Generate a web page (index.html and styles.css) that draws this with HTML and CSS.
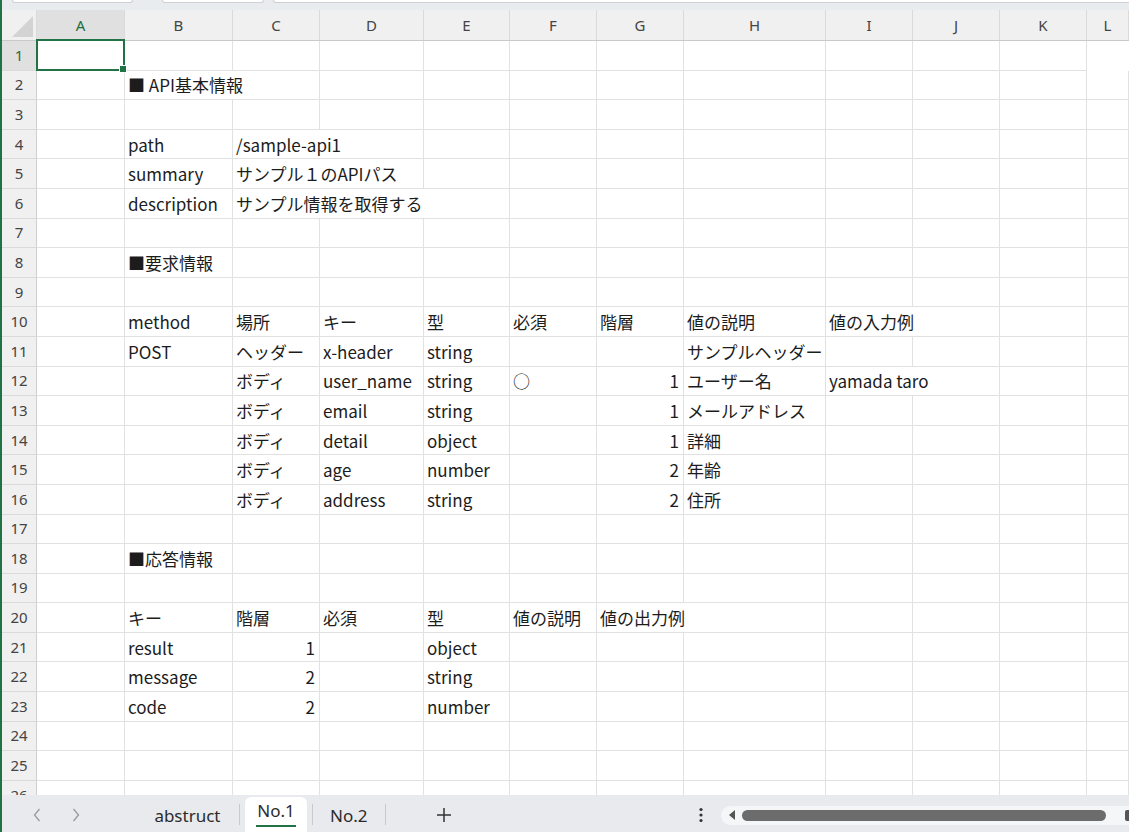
FILE: index.html
```html
<!DOCTYPE html>
<html lang="ja">
<head>
<meta charset="utf-8">
<title>Sheet</title>
<link rel="stylesheet" href="styles.css">
</head>
<body>
<div class="app">
  <div class="sheet">
    <div class="topstrip">
      <div class="box b1"></div>
      <div class="box b2"></div>
      <div class="box b3"></div>
    </div>
    <div class="colhead">
      <div class="corner"><div class="tri"></div></div>
      <div class="act">A</div><div>B</div><div>C</div><div>D</div><div>E</div><div>F</div><div>G</div><div>H</div><div>I</div><div>J</div><div>K</div><div>L</div>
    </div>

    <div class="row"><div class="rh act">1</div><div class="sel"><span class="selbox"></span></div><div></div><div></div><div></div><div></div><div></div><div></div><div></div><div></div><div></div><div></div></div>
    <div class="row"><div class="rh">2</div><div></div><div class="sp2">■ API基本情報</div><div></div><div></div><div></div><div></div><div></div><div></div><div></div><div></div><div></div></div>
    <div class="row"><div class="rh">3</div><div></div><div></div><div></div><div></div><div></div><div></div><div></div><div></div><div></div><div></div><div></div><div></div></div>
    <div class="row"><div class="rh">4</div><div></div><div>path</div><div class="sp2">/sample-api1</div><div></div><div></div><div></div><div></div><div></div><div></div><div></div><div></div></div>
    <div class="row"><div class="rh">5</div><div></div><div>summary</div><div class="sp2">サンプル１のAPIパス</div><div></div><div></div><div></div><div></div><div></div><div></div><div></div><div></div></div>
    <div class="row"><div class="rh">6</div><div></div><div>description</div><div class="sp3">サンプル情報を取得する</div><div></div><div></div><div></div><div></div><div></div><div></div><div></div></div>
    <div class="row"><div class="rh">7</div><div></div><div></div><div></div><div></div><div></div><div></div><div></div><div></div><div></div><div></div><div></div><div></div></div>
    <div class="row"><div class="rh">8</div><div></div><div>■要求情報</div><div></div><div></div><div></div><div></div><div></div><div></div><div></div><div></div><div></div><div></div></div>
    <div class="row"><div class="rh">9</div><div></div><div></div><div></div><div></div><div></div><div></div><div></div><div></div><div></div><div></div><div></div><div></div></div>
    <div class="row"><div class="rh">10</div><div></div><div>method</div><div>場所</div><div>キー</div><div>型</div><div>必須</div><div>階層</div><div>値の説明</div><div class="sp2">値の入力例</div><div></div><div></div></div>
    <div class="row"><div class="rh">11</div><div></div><div>POST</div><div>ヘッダー</div><div>x-header</div><div>string</div><div></div><div></div><div>サンプルヘッダー</div><div></div><div></div><div></div><div></div></div>
    <div class="row"><div class="rh">12</div><div></div><div></div><div>ボディ</div><div>user_name</div><div>string</div><div>○</div><div class="n">1</div><div>ユーザー名</div><div class="sp2">yamada taro</div><div></div><div></div></div>
    <div class="row"><div class="rh">13</div><div></div><div></div><div>ボディ</div><div>email</div><div>string</div><div></div><div class="n">1</div><div>メールアドレス</div><div></div><div></div><div></div><div></div></div>
    <div class="row"><div class="rh">14</div><div></div><div></div><div>ボディ</div><div>detail</div><div>object</div><div></div><div class="n">1</div><div>詳細</div><div></div><div></div><div></div><div></div></div>
    <div class="row"><div class="rh">15</div><div></div><div></div><div>ボディ</div><div>age</div><div>number</div><div></div><div class="n">2</div><div>年齢</div><div></div><div></div><div></div><div></div></div>
    <div class="row"><div class="rh">16</div><div></div><div></div><div>ボディ</div><div>address</div><div>string</div><div></div><div class="n">2</div><div>住所</div><div></div><div></div><div></div><div></div></div>
    <div class="row"><div class="rh">17</div><div></div><div></div><div></div><div></div><div></div><div></div><div></div><div></div><div></div><div></div><div></div><div></div></div>
    <div class="row"><div class="rh">18</div><div></div><div>■応答情報</div><div></div><div></div><div></div><div></div><div></div><div></div><div></div><div></div><div></div><div></div></div>
    <div class="row"><div class="rh">19</div><div></div><div></div><div></div><div></div><div></div><div></div><div></div><div></div><div></div><div></div><div></div><div></div></div>
    <div class="row"><div class="rh">20</div><div></div><div>キー</div><div>階層</div><div>必須</div><div>型</div><div>値の説明</div><div class="sp2">値の出力例</div><div></div><div></div><div></div><div></div></div>
    <div class="row"><div class="rh">21</div><div></div><div>result</div><div class="n">1</div><div></div><div>object</div><div></div><div></div><div></div><div></div><div></div><div></div><div></div></div>
    <div class="row"><div class="rh">22</div><div></div><div>message</div><div class="n">2</div><div></div><div>string</div><div></div><div></div><div></div><div></div><div></div><div></div><div></div></div>
    <div class="row"><div class="rh">23</div><div></div><div>code</div><div class="n">2</div><div></div><div>number</div><div></div><div></div><div></div><div></div><div></div><div></div><div></div></div>
    <div class="row"><div class="rh">24</div><div></div><div></div><div></div><div></div><div></div><div></div><div></div><div></div><div></div><div></div><div></div><div></div></div>
    <div class="row"><div class="rh">25</div><div></div><div></div><div></div><div></div><div></div><div></div><div></div><div></div><div></div><div></div><div></div><div></div></div>
    <div class="row"><div class="rh">26</div><div></div><div></div><div></div><div></div><div></div><div></div><div></div><div></div><div></div><div></div><div></div><div></div></div>
  </div>

  <div class="tabbar">
    <div class="nav nav1"><svg width="10" height="16" viewBox="0 0 10 16"><path d="M7.5 2 L2.5 8 L7.5 14" fill="none" stroke="#9a9a9a" stroke-width="1.3"/></svg></div>
    <div class="nav"><svg width="10" height="16" viewBox="0 0 10 16"><path d="M2.5 2 L7.5 8 L2.5 14" fill="none" stroke="#9a9a9a" stroke-width="1.3"/></svg></div>
    <div class="tab t-abs">abstruct</div>
    <div class="sep"></div>
    <div class="tab active"><span class="ul">No.1</span></div>
    <div class="sep s2"></div>
    <div class="tab t-no2">No.2</div>
    <div class="sep"></div>
    <div class="add"><svg width="16" height="16" viewBox="0 0 16 16"><path d="M8 1 V15 M1 8 H15" stroke="#333" stroke-width="1.5"/></svg></div>
    <div class="more"><svg width="4" height="16" viewBox="0 0 4 16"><circle cx="2" cy="2.5" r="1.6" fill="#333"/><circle cx="2" cy="8" r="1.6" fill="#333"/><circle cx="2" cy="13.5" r="1.6" fill="#333"/></svg></div>
    <div class="scroll">
      <svg class="larr" width="8" height="12" viewBox="0 0 8 12"><path d="M7 1 L1 6 L7 11 Z" fill="#555"/></svg>
      <div class="thumb"></div>
      <div class="rarr"></div>
    </div>
  </div>
</div>
</body>
</html>
```
FILE: styles.css
```css
* { box-sizing: border-box; margin: 0; padding: 0; }
html, body { width: 1129px; height: 832px; overflow: hidden; background: #fff; }
body { font-family: "Noto Sans CJK JP", "Noto Sans", sans-serif; }

.app {
  height: 832px;
  border-left: 2px solid #217346;
  display: flex;
  flex-direction: column;
}

.sheet { height: 795px; overflow: hidden; flex: none; }

.topstrip { height: 10px; background: #e9ecef; display: flex; }
.box {
  height: 3px;
  background: #fff;
  border: 1px solid #cdd0d4;
  border-top: none;
  border-radius: 0 0 5px 5px;
}
.b1 { margin-left: 10px; width: 121px; }
.b2 { margin-left: 29px; width: 102px; }
.b3 { margin-left: 9px; flex: 1; border-right: none; border-radius: 0 0 0 5px; }

.colhead, .row {
  display: grid;
  grid-template-columns: 35px 88px 108px 87px 104px 86px 87px 87px 142px 87px 87px 87px 1fr;
}

.colhead { height: 31px; background: #f0f0f0; border-bottom: 1px solid #c9c9c9; }
.colhead > div {
  border-right: 1px solid #dadada;
  display: flex;
  align-items: center;
  justify-content: center;
  font-family: "Noto Sans", sans-serif;
  font-size: 15px;
  color: #444;
}
.colhead > .act { background: #e0e0e0; color: #1e6e3e; }
.corner { align-items: flex-end !important; justify-content: flex-end !important; padding: 0 3px 3px 0; }
.tri { width: 21px; height: 21px; background: #d3d3d3; clip-path: polygon(100% 0, 100% 100%, 0 100%); }

.row { height: 29.6px; }
.row > div {
  border-right: 1px solid #e1e1e1;
  border-bottom: 1px solid #e1e1e1;
  padding: 0 3px;
  display: flex;
  align-items: center;
  white-space: nowrap;
  font-size: 17px;
  line-height: 1;
  color: #1c1c1c;
  min-width: 0;
}
.row > .rh {
  background: #f0f0f0;
  border-right: 1px solid #cfcfcf;
  border-bottom: 1px solid #dadada;
  justify-content: center;
  font-family: "Noto Sans", sans-serif;
  font-size: 15px;
  color: #444;
  padding: 0;
}
.row > .rh.act { background: #e0e0e0; color: #1e6e3e; }
.row > .n { justify-content: flex-end; padding-right: 4px; }
.row > .sp2 { grid-column: span 2; }
.row > .sp3 { grid-column: span 3; }

.sel { position: relative; }
.selbox {
  position: absolute;
  left: -1px; top: -2px; right: -1px; bottom: -1px;
  border: 2px solid #217346;
  z-index: 2;
}
.selbox::after {
  content: "";
  position: absolute;
  right: -4px; bottom: -4px;
  width: 6px; height: 6px;
  background: #217346;
  border: 1px solid #fff;
}

.tabbar {
  height: 37px;
  flex: none;
  background: #e8eaee;
  display: flex;
  align-items: stretch;
  font-family: "Noto Sans", sans-serif;
  font-size: 17px;
  color: #2b2b2b;
}
.nav { width: 39px; display: flex; align-items: center; justify-content: center; padding-top: 2px; }
.nav1 { margin-left: 16px; }
.tab { display: flex; align-items: center; justify-content: center; padding-top: 3px; }
.t-abs { margin-left: 40px; width: 104px; }
.sep { width: 1px; background: #c8c9cc; margin: 9px 0 7px; }
.active {
  margin: 2px 5px 0 5px;
  width: 62px;
  background: #fff;
  border-radius: 6px 6px 0 0;
  align-items: flex-start;
  padding-top: 3px;
}
.ul { border-bottom: 2px solid #217346; padding: 0 1px 3px; line-height: 22px; }
.t-no2 { width: 72px; }
.add { width: 118px; display: flex; align-items: center; justify-content: center; padding-top: 2px; }
.more { margin-left: 185px; width: 26px; display: flex; align-items: center; justify-content: center; padding-top: 2px; }
.scroll {
  margin-left: 7px;
  flex: 1;
  align-self: center;
  height: 19px;
  margin-top: 3px;
  background: #f5f6f8;
  border-radius: 10px 0 0 10px;
  display: flex;
  align-items: center;
  padding-left: 7px;
}
.larr { flex: none; }
.thumb { margin-left: 6px; width: 364px; height: 11px; border-radius: 6px; background: #6c6c6c; flex: none; }
.rarr { margin-left: 19px; width: 4px; height: 11px; background: #555; border-radius: 2px 0 0 2px; flex: none; }
```
